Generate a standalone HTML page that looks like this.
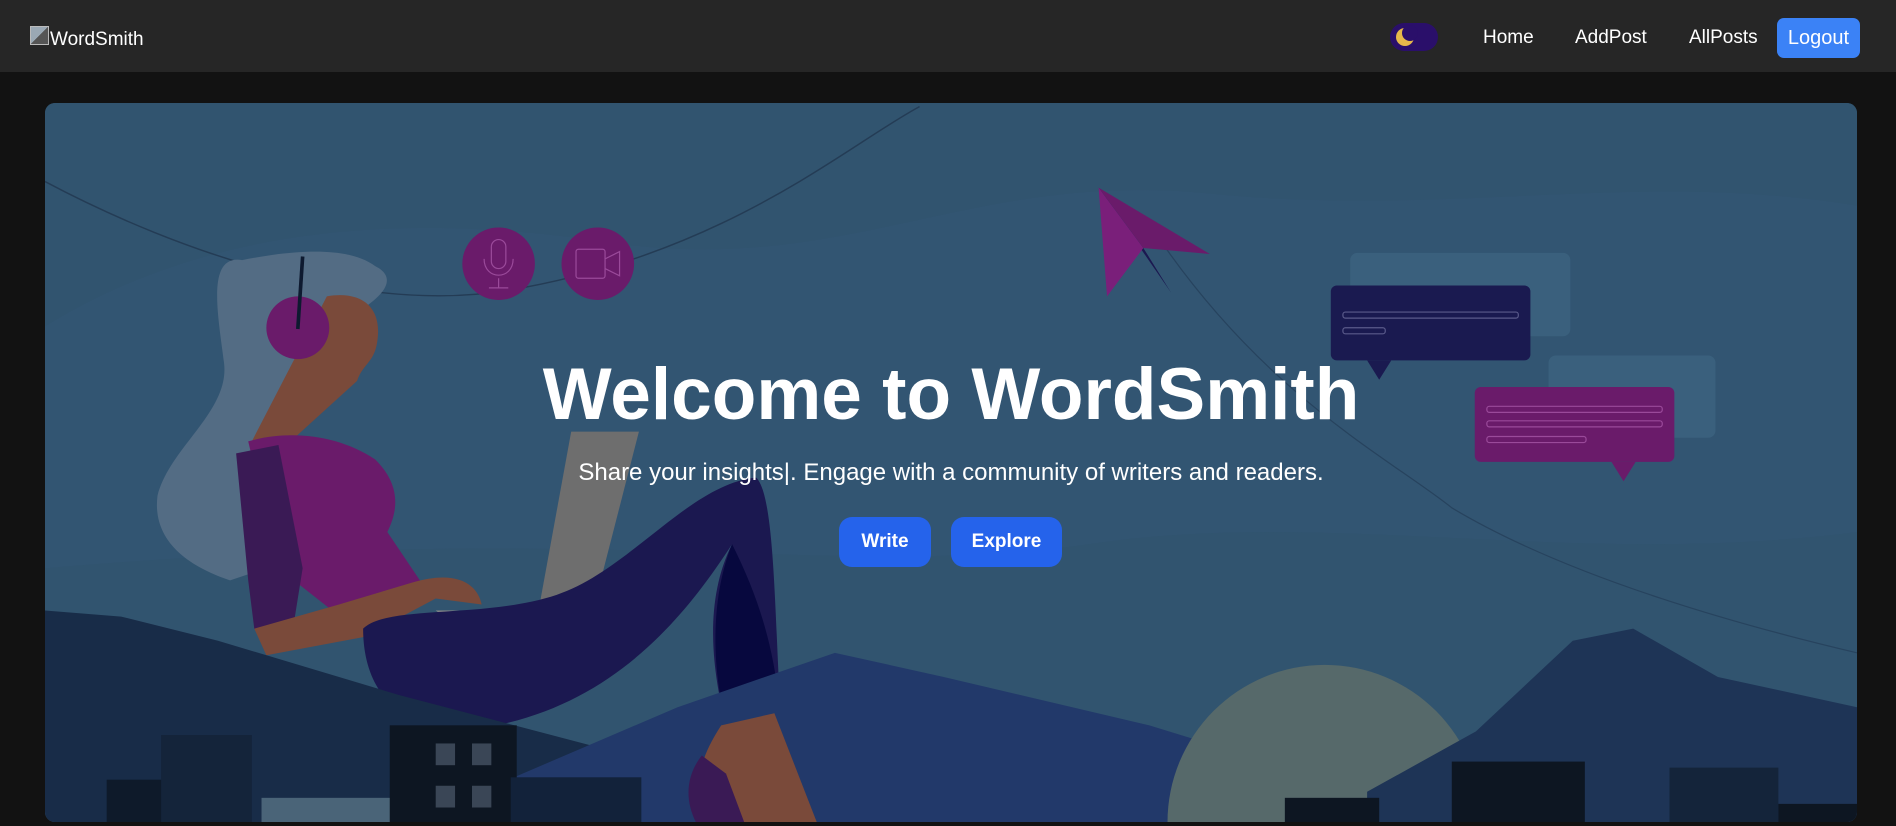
<!DOCTYPE html>
<html><head><meta charset="utf-8"><style>
*{margin:0;padding:0;box-sizing:border-box}
html,body{width:1896px;height:826px;overflow:hidden}
body{background:#121212;font-family:"Liberation Sans",sans-serif;position:relative}
.nav{position:absolute;left:0;top:0;width:1896px;height:72px;background:#262626}
.logo{position:absolute;left:30px;top:29px;color:#fff;font-size:19px;display:flex;align-items:flex-start}
.logo i{display:inline-block;width:19px;height:19px;background:linear-gradient(135deg,#9aa8b4 50%,#555 50%);border:1px solid #bbb;margin-right:1px;margin-top:-3px}
.tog{position:absolute;left:1390px;top:23px;width:48px;height:28px;border-radius:14px;background:#2a0f6a}
.tog:before{content:"";position:absolute;left:6px;top:5px;width:18px;height:18px;border-radius:50%;background:#e6b84a}
.tog:after{content:"";position:absolute;left:12px;top:2px;width:16px;height:16px;border-radius:50%;background:#2a0f6a}
.lk{position:absolute;top:27px;color:#fff;font-size:19px}
.lo{position:absolute;left:1777px;top:18px;width:83px;height:40px;background:#3b82f6;border-radius:7px;color:#fff;font-size:20px;text-align:center;line-height:40px}
.card{position:absolute;left:45px;top:103px;width:1812px;height:719px;border-radius:10px;overflow:hidden;background:#31546f}
.card svg{position:absolute;left:0;top:0}
h1{position:absolute;left:0;width:1812px;top:250px;text-align:center;color:#fff;font-size:73px;font-weight:bold;line-height:1.15}
p.s{position:absolute;left:0;width:1812px;top:356px;text-align:center;color:#fff;font-size:24px;line-height:1.2}
.b{position:absolute;top:414px;height:50px;background:#2563eb;border-radius:13px;color:#fff;font-weight:bold;font-size:19px;text-align:center;line-height:50px}
</style></head><body>
<div class="nav">
<div class="logo"><i></i>WordSmith</div>
<div class="tog"></div>
<div class="lk" style="left:1483px">Home</div>
<div class="lk" style="left:1575px">AddPost</div>
<div class="lk" style="left:1689px">AllPosts</div>
<div class="lo">Logout</div>
</div>
<div class="card">
<svg width="1812" height="719" viewBox="0 0 1498 595" preserveAspectRatio="none">
<g transform="translate(-37,-85)">
<rect x="37" y="85" width="1498" height="595" fill="#31546f"/>
<path d="M37,270 C150,200 300,170 500,200 C700,230 800,140 1000,160 C1200,180 1350,140 1535,170 L1535,440 C1300,470 1100,420 900,450 C700,480 500,430 37,470 Z" fill="#34597a" opacity=".3"/>
<path d="M37,150 C150,210 300,260 420,240 C600,210 700,120 760,88" stroke="#243c55" stroke-width="1.2" fill="none"/>
<path d="M960,200 C1050,330 1150,380 1200,420 C1300,480 1450,520 1535,540" stroke="#27435e" stroke-width="1" fill="none"/>
<path d="M200,215 C170,210 180,260 185,300 C190,340 140,370 130,410 C125,450 160,470 190,480 L220,470 L230,360 L300,255 C315,245 330,230 310,220 C290,205 250,205 200,215 Z" fill="#536c84"/>
<path d="M270,245 C300,240 315,255 312,280 C310,300 300,300 295,315 L240,365 L208,365 Z" fill="#7a4a3a"/>
<circle cx="246" cy="271" r="26" fill="#6a1b6a"/>
<path d="M250,212 L246,272" stroke="#0e1a30" stroke-width="3"/>
<circle cx="412" cy="218" r="30" fill="#6a1b6a"/>
<circle cx="494" cy="218" r="30" fill="#6a1b6a"/>
<rect x="406" y="198" width="12" height="24" rx="6" fill="none" stroke="#9a4a9a"/>
<path d="M400,214 C400,232 424,232 424,214 M412,230 L412,238 M404,238 L420,238" fill="none" stroke="#9a4a9a"/>
<rect x="476" y="206" width="24" height="24" rx="2" fill="none" stroke="#9a4a9a"/>
<path d="M500,214 L512,208 L512,228 L500,222" fill="none" stroke="#9a4a9a"/>
<path d="M472,357 L528,357 L490,505 L445,505 Z" fill="#6e6e6e"/>
<path d="M205,365 C240,355 280,360 310,380 C330,400 330,420 320,440 L355,492 L300,525 L230,470 Z" fill="#6a1b6a"/>
<path d="M195,375 L230,368 L250,470 L242,520 L210,520 L205,480 Z" fill="#3a1a55"/>
<path d="M210,520 L280,500 L340,482 C380,470 395,485 398,500 L360,495 L300,527 L220,542 Z" fill="#7a4a3a"/>
<path d="M360,505 L470,505 L460,512 L370,512 Z" fill="#8a8a8a"/>
<path d="M300,520 C320,500 400,512 460,492 C520,472 570,400 625,395 C640,410 640,500 645,590 L600,600 C590,560 580,500 605,450 C560,520 500,585 400,602 C340,610 300,580 300,520 Z" fill="#1b1850"/>
<path d="M605,450 C630,500 640,540 645,590 L600,598 C590,560 585,500 605,450 Z" fill="#07083e"/>
<path d="M37,505 L100,510 L180,530 L330,575 L520,625 L520,680 L37,680 Z" fill="#182c48"/>
<path d="M420,645 L560,585 L690,540 L780,560 L950,600 L1080,640 L1080,680 L420,680 Z" fill="#22396a"/>
<circle cx="1095" cy="680" r="130" fill="#56696a"/>
<path d="M1130,655 L1220,605 L1300,530 L1350,520 L1420,560 L1535,585 L1535,680 L1130,680 Z" fill="#1e3456"/>
<path d="M596,600 L640,590 L675,680 L600,680 C575,660 570,640 596,600 Z" fill="#7a4a3a"/>
<path d="M580,625 L600,640 L615,680 L575,680 C565,660 568,640 580,625 Z" fill="#3a1a55"/>
<rect x="88" y="645" width="50" height="35" fill="#0e1a2a"/>
<rect x="133" y="608" width="75" height="72" fill="#14243a"/>
<rect x="216" y="660" width="110" height="20" fill="#4a6478"/>
<rect x="322" y="600" width="105" height="80" fill="#0d1622"/>
<rect x="360" y="615" width="16" height="18" fill="#3a4656"/><rect x="390" y="615" width="16" height="18" fill="#3a4656"/>
<rect x="360" y="650" width="16" height="18" fill="#3a4656"/><rect x="390" y="650" width="16" height="18" fill="#3a4656"/>
<rect x="422" y="643" width="108" height="37" fill="#12223a"/>
<rect x="1062" y="660" width="78" height="20" fill="#0d1622"/>
<rect x="1200" y="630" width="110" height="50" fill="#0d1622"/>
<rect x="1380" y="635" width="90" height="45" fill="#14243a"/>
<rect x="1470" y="665" width="65" height="15" fill="#0d1622"/>
<path d="M908,155 L1000,210 L945,205 Z" fill="#6a1b6a"/>
<path d="M908,155 L945,205 L968,242 Z" fill="#1b1850"/>
<path d="M908,155 L945,205 L915,245 Z" fill="#7a1f7a"/>
<rect x="1116" y="209" width="182" height="69" rx="6" fill="#3d6581" opacity=".7"/>
<rect x="1280" y="294" width="138" height="68" rx="6" fill="#3d6581" opacity=".7"/>
<rect x="1100" y="236" width="165" height="62" rx="5" fill="#1a1a50"/>
<path d="M1130,298 L1150,298 L1140,314 Z" fill="#1a1a50"/>
<rect x="1110" y="258" width="145" height="5" rx="2" fill="none" stroke="#5a5a8a"/>
<rect x="1110" y="271" width="35" height="5" rx="2" fill="none" stroke="#5a5a8a"/>
<rect x="1219" y="320" width="165" height="62" rx="5" fill="#6a1b6a"/>
<path d="M1332,382 L1352,382 L1342,398 Z" fill="#6a1b6a"/>
<rect x="1229" y="336" width="145" height="5" rx="2" fill="none" stroke="#9a4a9a"/>
<rect x="1229" y="348" width="145" height="5" rx="2" fill="none" stroke="#9a4a9a"/>
<rect x="1229" y="361" width="82" height="5" rx="2" fill="none" stroke="#9a4a9a"/>
</g></svg>
<h1>Welcome to WordSmith</h1>
<p class="s">Share your insights|. Engage with a community of writers and readers.</p>
<div class="b" style="left:794px;width:92px">Write</div>
<div class="b" style="left:906px;width:111px">Explore</div>
</div>
</body></html>
